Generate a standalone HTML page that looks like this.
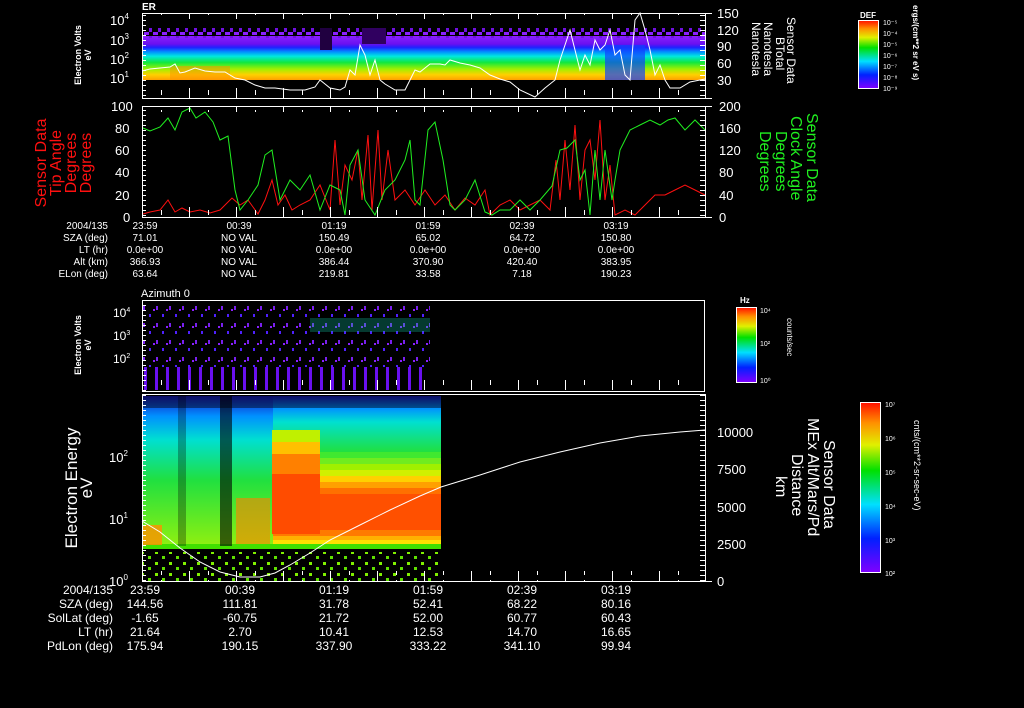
<!DOCTYPE html>
<html><head><meta charset="utf-8"><style>
html,body{margin:0;padding:0;background:#000;width:1024px;height:708px;overflow:hidden}
svg{display:block}
text{font-family:"Liberation Sans",sans-serif;fill:#fff}
</style></head><body>
<svg width="1024" height="708" viewBox="0 0 1024 708" xmlns="http://www.w3.org/2000/svg">
<defs>
<linearGradient id="g1" gradientUnits="userSpaceOnUse" x1="0" y1="36" x2="0" y2="80">
<stop offset="0" stop-color="#8a20ff"/><stop offset="0.18" stop-color="#6a10f0"/><stop offset="0.26" stop-color="#2020ff"/><stop offset="0.36" stop-color="#0090ff"/><stop offset="0.46" stop-color="#00e8e0"/><stop offset="0.6" stop-color="#10e840"/><stop offset="0.75" stop-color="#a0f000"/><stop offset="0.88" stop-color="#ffd000"/><stop offset="1" stop-color="#ffa000"/>
</linearGradient>
<linearGradient id="a1" x1="0" y1="0" x2="0" y2="1"><stop offset="0" stop-color="#1818c0"/><stop offset="1" stop-color="#0090ff"/></linearGradient>
<linearGradient id="a2" x1="0" y1="0" x2="0" y2="1"><stop offset="0" stop-color="#0090ff"/><stop offset="1" stop-color="#00e0d0"/></linearGradient>
<linearGradient id="a3" x1="0" y1="0" x2="0" y2="1"><stop offset="0" stop-color="#00e0d0"/><stop offset="1" stop-color="#20e040"/></linearGradient>
<linearGradient id="a4" x1="0" y1="0" x2="0" y2="1"><stop offset="0" stop-color="#20e040"/><stop offset="1" stop-color="#90f010"/></linearGradient>
<linearGradient id="cb" x1="0" y1="1" x2="0" y2="0">
<stop offset="0" stop-color="#8000ff"/><stop offset="0.2" stop-color="#0020ff"/><stop offset="0.4" stop-color="#00e0ff"/><stop offset="0.6" stop-color="#00e000"/><stop offset="0.75" stop-color="#e0f000"/><stop offset="0.88" stop-color="#ff9000"/><stop offset="1" stop-color="#ff1000"/>
</linearGradient>
<pattern id="p3" width="13" height="17" patternUnits="userSpaceOnUse">
<rect x="0" y="0" width="2" height="4" fill="#7a20f0"/><rect x="6" y="8" width="2" height="3" fill="#5020ff"/><rect x="10" y="3" width="2" height="2" fill="#8a20ff"/>
</pattern>
<pattern id="p3b" width="11" height="40" patternUnits="userSpaceOnUse">
<rect x="1" y="0" width="3" height="40" fill="#6a10f0"/>
</pattern>
<pattern id="dots" width="14" height="11" patternUnits="userSpaceOnUse">
<rect x="1" y="1" width="3" height="3" fill="#80f000"/><rect x="8" y="6" width="3" height="3" fill="#60e000"/>
</pattern>
<pattern id="purp" width="9" height="8" patternUnits="userSpaceOnUse">
<rect x="0" y="0" width="5" height="3" fill="#8a20ff"/><rect x="5" y="4" width="3" height="4" fill="#7010e0"/>
</pattern>
<pattern id="tx" width="47" height="10" patternUnits="userSpaceOnUse" x="142">
<rect x="0" y="0" width="1" height="10" fill="#fff"/><rect x="19" y="0" width="1" height="5" fill="#fff"/>
</pattern>
<pattern id="ty" width="10" height="5" patternUnits="userSpaceOnUse">
<rect x="0" y="0" width="6" height="1" fill="#fff"/>
</pattern>
</defs>

<!-- Panel 1 -->
<text x="142" y="10" font-size="10" font-weight="bold">ER</text>
<rect x="142" y="36" width="563" height="44" fill="url(#g1)"/>
<rect x="142" y="28" width="563" height="10" fill="url(#purp)"/>
<rect x="320" y="28" width="12" height="22" fill="#200040"/>
<rect x="362" y="28" width="24" height="16" fill="#300060"/>
<rect x="605" y="45" width="40" height="35" fill="#1040ff" opacity="0.7"/>
<rect x="170" y="66" width="60" height="14" fill="#ff9000" opacity="0.5"/>
<polyline fill="none" stroke="#fff" stroke-width="1" points="142,71 150,69 160,68 170,67 175,64 180,73 185,72 195,68 205,71 215,72 225,72 235,78 245,80 255,85 265,88 275,88 290,90 305,90 315,87 320,80 325,84 330,88 340,90 345,87 350,70 355,75 360,45 365,55 370,75 375,60 380,80 385,84 395,90 405,90 410,80 415,70 420,72 430,64 440,64 445,65 450,60 460,63 470,65 480,68 490,75 500,79 510,82 520,90 535,97 545,88 555,80 560,60 565,45 570,30 575,50 580,70 585,55 590,65 595,40 600,50 605,45 610,30 615,55 620,50 625,75 630,80 635,20 640,13 645,30 650,50 655,75 660,65 665,80 670,88 680,88 690,82 700,80 705,79"/>
<rect x="142" y="14" width="563" height="5" fill="url(#tx)"/>
<rect x="142" y="88" width="563" height="10" fill="url(#tx)"/>
<rect x="143" y="13" width="6" height="85" fill="url(#ty)"/>
<rect x="700" y="13" width="6" height="85" fill="url(#ty)"/>
<g stroke="#fff" stroke-width="1">
<line x1="142" y1="13.5" x2="712" y2="13.5"/><line x1="142" y1="98.5" x2="712" y2="98.5"/>
<line x1="142.5" y1="13" x2="142.5" y2="98"/><line x1="705.5" y1="13" x2="705.5" y2="98"/>
</g>
<text x="110" y="25" font-size="13">10<tspan font-size="8" dy="-6">4</tspan></text>
<text x="110" y="45" font-size="13">10<tspan font-size="8" dy="-6">3</tspan></text>
<text x="110" y="64" font-size="13">10<tspan font-size="8" dy="-6">2</tspan></text>
<text x="110" y="83" font-size="13">10<tspan font-size="8" dy="-6">1</tspan></text>
<text transform="translate(81,55) rotate(-90)" font-size="9" text-anchor="middle" font-weight="bold">Electron Volts</text>
<text transform="translate(91,55) rotate(-90)" font-size="9" text-anchor="middle" font-weight="bold">eV</text>
<text x="717" y="18" font-size="13">150</text><text x="717" y="35" font-size="13">120</text><text x="717" y="51" font-size="13">90</text><text x="717" y="68" font-size="13">60</text><text x="717" y="85" font-size="13">30</text>
<text transform="translate(787,17) rotate(90)" font-size="12">Sensor Data</text>
<text transform="translate(776,37) rotate(90)" font-size="12">BTotal</text>
<text transform="translate(764,22) rotate(90)" font-size="12">Nanotesla</text>
<text transform="translate(752,22) rotate(90)" font-size="12">Nanotesla</text>

<!-- DEF colorbar -->
<text x="860" y="18" font-size="8" font-weight="bold">DEF</text>
<rect x="858.5" y="20.5" width="20" height="68" fill="url(#cb)" stroke="#fff"/>
<g font-size="7"><text x="883" y="25">10⁻⁵</text><text x="883" y="36">10⁻⁴</text><text x="883" y="47">10⁻⁵</text><text x="883" y="58">10⁻⁶</text><text x="883" y="69">10⁻⁷</text><text x="883" y="80">10⁻⁸</text><text x="883" y="91">10⁻⁹</text></g>
<text transform="translate(913,5) rotate(90)" font-size="8" font-weight="bold">ergs/(cm**2 sr eV s)</text>

<!-- Panel 2 -->
<polyline fill="none" stroke="#ff1010" stroke-width="1" points="143,214 150,212 160,210 168,200 175,212 182,208 190,212 200,210 210,213 220,210 232,198 240,205 248,200 258,214 265,200 272,180 278,205 285,195 292,210 300,205 310,200 320,185 330,210 335,140 340,205 345,165 352,180 358,150 362,200 368,135 372,210 378,130 382,200 388,150 395,200 405,190 415,205 425,190 435,205 445,195 455,210 465,198 475,205 485,190 490,215 500,205 510,200 520,210 530,205 540,200 550,210 556,160 560,200 565,140 570,190 575,125 580,200 585,150 590,140 595,180 600,120 605,200 610,165 615,215 625,210 635,215 645,205 655,195 665,195 675,190 685,185 695,190 705,195"/>
<polyline fill="none" stroke="#20f020" stroke-width="1" points="143,128 150,131 160,127 168,118 175,130 182,112 190,108 196,118 205,112 213,122 220,140 228,136 235,190 240,210 248,200 258,185 265,155 272,150 280,200 290,180 300,190 310,175 320,210 330,185 340,190 345,215 350,165 358,150 365,200 375,215 385,190 395,180 405,160 410,140 415,200 420,205 428,130 435,122 443,160 450,205 455,210 465,200 475,180 485,212 492,215 500,210 510,210 520,200 530,210 540,200 552,186 560,150 567,148 575,140 580,180 585,170 590,215 595,150 600,200 605,150 612,200 615,180 620,150 630,130 640,125 650,120 660,125 668,120 675,118 685,130 695,120 700,125 705,130"/>
<rect x="142" y="107" width="563" height="5" fill="url(#tx)"/>
<rect x="142" y="207" width="563" height="10" fill="url(#tx)"/>
<rect x="143" y="106" width="6" height="111" fill="url(#ty)"/>
<rect x="700" y="106" width="6" height="111" fill="url(#ty)"/>
<g stroke="#fff" stroke-width="1">
<line x1="142" y1="106.5" x2="712" y2="106.5"/><line x1="142" y1="217.5" x2="712" y2="217.5"/>
<line x1="142.5" y1="106" x2="142.5" y2="217"/><line x1="705.5" y1="106" x2="705.5" y2="217"/>
</g>
<g font-size="13"><text x="111" y="111">100</text><text x="115" y="133">80</text><text x="115" y="155">60</text><text x="115" y="177">40</text><text x="115" y="200">20</text><text x="123" y="222">0</text>
<text x="719" y="111">200</text><text x="719" y="133">160</text><text x="719" y="155">120</text><text x="719" y="177">80</text><text x="719" y="200">40</text><text x="719" y="222">0</text></g>
<g font-size="16" text-anchor="middle">
<text transform="translate(46,163) rotate(-90)" style="fill:#ff1010">Sensor Data</text>
<text transform="translate(61,163) rotate(-90)" style="fill:#ff1010">Tip Angle</text>
<text transform="translate(76,163) rotate(-90)" style="fill:#ff1010">Degrees</text>
<text transform="translate(91,163) rotate(-90)" style="fill:#ff1010">Degrees</text>
</g>
<g font-size="16">
<text transform="translate(807,113) rotate(90)" style="fill:#20f020">Sensor Data</text>
<text transform="translate(791,116) rotate(90)" style="fill:#20f020">Clock Angle</text>
<text transform="translate(776,131) rotate(90)" style="fill:#20f020">Degrees</text>
<text transform="translate(760,131) rotate(90)" style="fill:#20f020">Degrees</text>
</g>
<g font-size="10" text-anchor="end"><text x="108" y="229">2004/135</text><text x="108" y="241">SZA (deg)</text><text x="108" y="253">LT (hr)</text><text x="108" y="265">Alt (km)</text><text x="108" y="277">ELon (deg)</text></g>
<g font-size="10" text-anchor="middle">
<text x="145" y="229">23:59</text><text x="239" y="229">00:39</text><text x="334" y="229">01:19</text><text x="428" y="229">01:59</text><text x="522" y="229">02:39</text><text x="616" y="229">03:19</text>
<text x="145" y="241">71.01</text><text x="239" y="241">NO VAL</text><text x="334" y="241">150.49</text><text x="428" y="241">65.02</text><text x="522" y="241">64.72</text><text x="616" y="241">150.80</text>
<text x="145" y="253">0.0e+00</text><text x="239" y="253">NO VAL</text><text x="334" y="253">0.0e+00</text><text x="428" y="253">0.0e+00</text><text x="522" y="253">0.0e+00</text><text x="616" y="253">0.0e+00</text>
<text x="145" y="265">366.93</text><text x="239" y="265">NO VAL</text><text x="334" y="265">386.44</text><text x="428" y="265">370.90</text><text x="522" y="265">420.40</text><text x="616" y="265">383.95</text>
<text x="145" y="277">63.64</text><text x="239" y="277">NO VAL</text><text x="334" y="277">219.81</text><text x="428" y="277">33.58</text><text x="522" y="277">7.18</text><text x="616" y="277">190.23</text>
</g>

<!-- Panel 3 -->
<text x="141" y="297" font-size="11">Azimuth 0</text>
<rect x="143" y="302" width="287" height="65" fill="url(#p3)"/>
<rect x="143" y="367" width="287" height="23" fill="url(#p3b)"/>
<rect x="274" y="308" width="156" height="59" fill="url(#p3)"/>
<rect x="310" y="318" width="120" height="14" fill="#10c0a0" opacity="0.3"/>
<rect x="142" y="380" width="563" height="10" fill="url(#tx)"/>
<rect x="143" y="300" width="6" height="91" fill="url(#ty)"/>
<g stroke="#fff" stroke-width="1" fill="none"><rect x="142.5" y="300.5" width="562" height="91"/></g>
<g font-size="12"><text x="113" y="317">10<tspan font-size="7" dy="-5">4</tspan></text><text x="113" y="340">10<tspan font-size="7" dy="-5">3</tspan></text><text x="113" y="363">10<tspan font-size="7" dy="-5">2</tspan></text></g>
<text transform="translate(81,345) rotate(-90)" font-size="9" text-anchor="middle" font-weight="bold">Electron Volts</text>
<text transform="translate(91,345) rotate(-90)" font-size="9" text-anchor="middle" font-weight="bold">eV</text>
<text x="740" y="303" font-size="8" font-weight="bold">Hz</text>
<rect x="736.5" y="307.5" width="20" height="75" fill="url(#cb)" stroke="#fff"/>
<g font-size="7"><text x="760" y="313">10⁴</text><text x="760" y="346">10²</text><text x="760" y="383">10⁰</text></g>
<text transform="translate(787,318) rotate(90)" font-size="8">counts/sec</text>

<!-- Panel 4 spectrogram -->
<rect x="143" y="396" width="130" height="20" fill="url(#a1)"/>
<rect x="143" y="416" width="130" height="24" fill="url(#a2)"/>
<rect x="143" y="440" width="130" height="40" fill="url(#a3)"/>
<rect x="143" y="480" width="130" height="66" fill="url(#a4)"/>
<rect x="273" y="396" width="168" height="12" fill="url(#a1)"/>
<rect x="273" y="408" width="168" height="14" fill="url(#a2)"/>
<rect x="273" y="422" width="168" height="30" fill="url(#a3)"/>
<g>
<rect x="273" y="452" width="168" height="6" fill="#40e830"/>
<rect x="273" y="458" width="168" height="6" fill="#70ec20"/>
<rect x="273" y="464" width="168" height="6" fill="#a0f000"/>
<rect x="273" y="470" width="168" height="6" fill="#d0f000"/>
<rect x="273" y="476" width="168" height="6" fill="#ffd000"/>
<rect x="273" y="482" width="168" height="6" fill="#ffa000"/>
<rect x="273" y="488" width="168" height="6" fill="#ff7000"/>
<rect x="273" y="494" width="168" height="36" fill="#ff5000"/>
<rect x="273" y="530" width="168" height="6" fill="#ff7a00"/>
<rect x="273" y="536" width="168" height="4" fill="#ffb000"/>
<rect x="273" y="540" width="168" height="4" fill="#ffe000"/>
</g>
<rect x="143" y="544" width="298" height="5" fill="#40e000"/>
<rect x="272" y="430" width="48" height="12" fill="#c0f000"/>
<rect x="272" y="442" width="48" height="12" fill="#ffc000"/>
<rect x="272" y="454" width="48" height="20" fill="#ff8000"/>
<rect x="272" y="474" width="48" height="60" fill="#ff4c00"/>
<rect x="143" y="552" width="298" height="29" fill="url(#dots)"/>
<rect x="143" y="396" width="298" height="12" fill="#000" opacity="0.45"/>
<rect x="220" y="396" width="12" height="150" fill="#000" opacity="0.6"/>
<rect x="178" y="396" width="8" height="150" fill="#000" opacity="0.3"/>
<rect x="236" y="498" width="34" height="46" fill="#ff8000" opacity="0.6"/>
<rect x="142" y="525" width="20" height="20" fill="#ff9000" opacity="0.8"/>
<polyline fill="none" stroke="#fff" points="142,521 160,532 180,548 200,562 220,572 240,577 260,577 275,573 290,565 310,553 330,540 360,525 390,510 420,496 441,487 480,475 520,462 560,452 600,443 640,436 680,432 705,430"/>
<rect x="142" y="571" width="563" height="10" fill="url(#tx)"/>
<rect x="143" y="395" width="6" height="186" fill="url(#ty)"/>
<rect x="700" y="395" width="6" height="186" fill="url(#ty)"/>
<g stroke="#fff" stroke-width="1" fill="none"><rect x="142.5" y="394.5" width="563" height="187"/><line x1="705" y1="581.5" x2="712" y2="581.5"/></g>
<g font-size="13"><text x="109" y="462">10<tspan font-size="8" dy="-6">2</tspan></text><text x="109" y="524">10<tspan font-size="8" dy="-6">1</tspan></text><text x="109" y="586">10<tspan font-size="8" dy="-6">0</tspan></text></g>
<text transform="translate(77,488) rotate(-90)" font-size="17" text-anchor="middle">Electron Energy</text>
<text transform="translate(92,488) rotate(-90)" font-size="17" text-anchor="middle">eV</text>
<g font-size="13"><text x="717" y="437">10000</text><text x="717" y="474">7500</text><text x="717" y="512">5000</text><text x="717" y="549">2500</text><text x="717" y="586">0</text></g>
<g font-size="16">
<text transform="translate(824,440) rotate(90)">Sensor Data</text>
<text transform="translate(808,418) rotate(90)">MEx Alt/Mars/Pd</text>
<text transform="translate(792,454) rotate(90)">Distance</text>
<text transform="translate(776,476) rotate(90)">km</text>
</g>
<rect x="860.5" y="402.5" width="20" height="170" fill="url(#cb)" stroke="#fff"/>
<g font-size="7"><text x="885" y="407">10⁷</text><text x="885" y="441">10⁶</text><text x="885" y="475">10⁵</text><text x="885" y="509">10⁴</text><text x="885" y="543">10³</text><text x="885" y="576">10²</text></g>
<text transform="translate(914,420) rotate(90)" font-size="9">cnts/(cm**2-sr-sec-eV)</text>

<g font-size="12" text-anchor="end"><text x="113" y="594">2004/135</text><text x="113" y="608">SZA (deg)</text><text x="113" y="622">SolLat (deg)</text><text x="113" y="636">LT (hr)</text><text x="113" y="650">PdLon (deg)</text></g>
<g font-size="12" text-anchor="middle">
<text x="145" y="594">23:59</text><text x="240" y="594">00:39</text><text x="334" y="594">01:19</text><text x="428" y="594">01:59</text><text x="522" y="594">02:39</text><text x="616" y="594">03:19</text>
<text x="145" y="608">144.56</text><text x="240" y="608">111.81</text><text x="334" y="608">31.78</text><text x="428" y="608">52.41</text><text x="522" y="608">68.22</text><text x="616" y="608">80.16</text>
<text x="145" y="622">-1.65</text><text x="240" y="622">-60.75</text><text x="334" y="622">21.72</text><text x="428" y="622">52.00</text><text x="522" y="622">60.77</text><text x="616" y="622">60.43</text>
<text x="145" y="636">21.64</text><text x="240" y="636">2.70</text><text x="334" y="636">10.41</text><text x="428" y="636">12.53</text><text x="522" y="636">14.70</text><text x="616" y="636">16.65</text>
<text x="145" y="650">175.94</text><text x="240" y="650">190.15</text><text x="334" y="650">337.90</text><text x="428" y="650">333.22</text><text x="522" y="650">341.10</text><text x="616" y="650">99.94</text>
</g>
</svg>
</body></html>
